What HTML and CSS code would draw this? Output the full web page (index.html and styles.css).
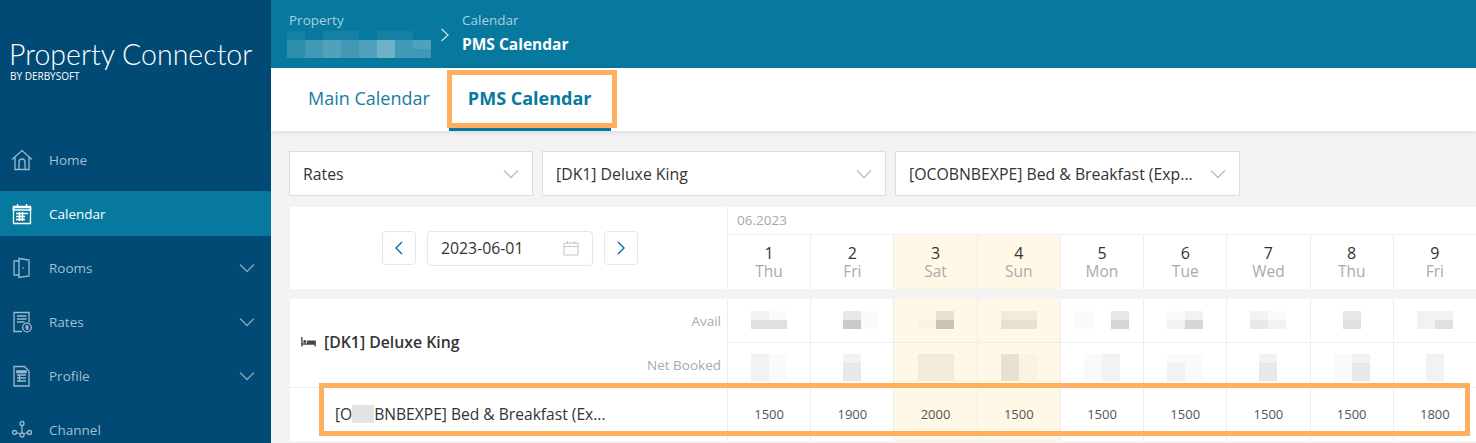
FILE: index.html
```html
<!DOCTYPE html>
<html lang="en">
  <head>
    <meta charset="UTF-8" />
    <title>Property Connector - PMS Calendar</title>
    <link rel="stylesheet" href="styles.css">
  </head>
  <body>
    <div class="app">
      <aside class="sidebar">
        <div class="logo">
          <div class="logo-name">Property Connector</div>
          <div class="logo-sub">BY DERBYSOFT</div>
        </div>
        <nav class="side-nav">
          <a class="nav-item">
            <svg class="nav-icon" viewBox="0 0 22 22"><path d="M1 10.500 11 1.500l10 9M4 8.500V20.500H18V8.500M8 20.500V13a3 3 0 0 1 6 0v7.500"/></svg>
            <span>Home</span>
          </a>
          <a class="nav-item active">
            <svg class="nav-icon" viewBox="0 0 22 22"><path d="M2.500 3.500h17v17h-17zM6.500 1v4M15.500 1v4"/><path class="thick" d="M2.500 4.500h17v2.500h-17zM5 10.500h12M5 13.500h9M5 16.500h9M8.500 9v9M11.500 9v9"/></svg>
            <span>Calendar</span>
          </a>
          <a class="nav-item">
            <svg class="nav-icon" viewBox="0 0 22 22"><path d="M8 4H3v14h5M8 1.500l10 1.500v16L8 20.500zM11.500 11h1.300"/></svg>
            <span>Rooms</span>
            <svg class="nav-caret" viewBox="0 0 16 10"><path d="M1 1.500 8 8.500l7-7"/></svg>
          </a>
          <a class="nav-item">
            <svg class="nav-icon" viewBox="0 0 22 22"><path d="M11 20.500H3V1.500h15v10M6 5h9.500M6 8h9.500M6 11h7.500"/><circle cx="16" cy="16.500" r="4.300"/><path d="M17.500 14.800h-2.300v1.700h1.700v1.700h-2.300"/></svg>
            <span>Rates</span>
            <svg class="nav-caret" viewBox="0 0 16 10"><path d="M1 1.500 8 8.500l7-7"/></svg>
          </a>
          <a class="nav-item">
            <svg class="nav-icon" viewBox="0 0 22 22"><path d="M3 1.500h10.500L18 6v15H3zM6 10h9M6 13h9M6 16h9M8.500 9.500v7.500"/><path class="thick" d="M6 6h9v1.500H6z"/></svg>
            <span>Profile</span>
            <svg class="nav-caret" viewBox="0 0 16 10"><path d="M1 1.500 8 8.500l7-7"/></svg>
          </a>
          <a class="nav-item">
            <svg class="nav-icon" viewBox="0 0 22 22"><circle cx="11" cy="4.500" r="2"/><circle cx="11" cy="16" r="2"/><circle cx="3.500" cy="13.500" r="2"/><circle cx="18.500" cy="13.500" r="2"/><path d="M11 6.500v7.500M5.500 13.500l3.800 1.500M16.500 13.500l-3.800 1.500"/></svg>
            <span>Channel</span>
          </a>
        </nav>
      </aside>

      <main class="main">
        <div class="topbar">
          <div class="crumb">
            <div class="crumb-label">Property</div>
            <div class="mosaic top-mosaic">
              <i class="t1"></i><i></i><i class="t1"></i><i class="t1"></i><i></i><i class="t1"></i><i class="t1"></i><i></i>
              <i class="t2"></i><i class="t3"></i><i class="t4"></i><i class="t3"></i><i class="t4"></i><i class="t5"></i><i class="t3"></i><i class="t4"></i>
              <i class="t2"></i><i class="t3"></i><i class="t4"></i><i class="t3"></i><i class="t4"></i><i class="t5"></i><i class="t3"></i><i class="t3"></i>
            </div>
          </div>
          <svg class="crumb-arrow" viewBox="0 0 10 14"><path d="M1.500 1 8 7l-6.500 6"/></svg>
          <div class="crumb">
            <div class="crumb-label">Calendar</div>
            <div class="crumb-current">PMS Calendar</div>
          </div>
        </div>

        <div class="tabs">
          <a class="tab">Main Calendar</a>
          <a class="tab tab-active">PMS Calendar</a>
          <div class="mark mark-tab"></div>
        </div>

        <div class="content">
          <div class="filters">
            <div class="select select-type"><span class="select-text">Rates</span><svg class="select-caret" viewBox="0 0 16 10"><path d="M1 1.500 8 8.500l7-7"/></svg></div>
            <div class="select select-wide"><span class="select-text">[DK1] Deluxe King</span><svg class="select-caret" viewBox="0 0 16 10"><path d="M1 1.500 8 8.500l7-7"/></svg></div>
            <div class="select select-wide"><span class="select-text">[OCOBNBEXPE] Bed &amp; Breakfast (Exp...</span><svg class="select-caret" viewBox="0 0 16 10"><path d="M1 1.500 8 8.500l7-7"/></svg></div>
          </div>

          <section class="card head-card">
            <div class="pager">
              <button class="pager-btn"><svg viewBox="0 0 10 14"><path d="M8 1 2 7l6 6"/></svg></button>
              <div class="date-input">
                <span>2023-06-01</span>
                <svg class="date-icon" viewBox="0 0 16 16"><path d="M1 3h14v12H1zM1 6.500h14M4.500 1v3M11.500 1v3"/></svg>
              </div>
              <button class="pager-btn"><svg viewBox="0 0 10 14"><path d="M2 1l6 6-6 6"/></svg></button>
            </div>
            <div class="month-col">
              <div class="month">06.2023</div>
              <div class="days">
                <div class="day"><b>1</b><span>Thu</span></div>
                <div class="day"><b>2</b><span>Fri</span></div>
                <div class="day weekend"><b>3</b><span>Sat</span></div>
                <div class="day weekend"><b>4</b><span>Sun</span></div>
                <div class="day"><b>5</b><span>Mon</span></div>
                <div class="day"><b>6</b><span>Tue</span></div>
                <div class="day"><b>7</b><span>Wed</span></div>
                <div class="day"><b>8</b><span>Thu</span></div>
                <div class="day"><b>9</b><span>Fri</span></div>
              </div>
            </div>
          </section>

          <section class="card room-card">
            <div class="room-head">
              <div class="room-name">
                <svg class="bed-icon" viewBox="0 0 18 12"><path d="M1 1v10.500h1.500V9.500h13v2H17V5H7.500v3H2.500V1z"/><circle cx="5" cy="6" r="1.700"/></svg>
                <span>[DK1] Deluxe King</span>
              </div>
              <div class="room-labels">
                <div>Avail</div>
                <div>Net Booked</div>
              </div>
            </div>

            <div class="cell"><div class="mosaic c2"><i class="g2"></i><i class="g1"></i><i class="g4"></i><i class="g4"></i></div></div>
            <div class="cell"><div class="mosaic c3"><i></i><i class="g3"></i><i class="g1"></i><i></i><i class="g6"></i><i class="g1"></i></div></div>
            <div class="cell weekend"><div class="mosaic c2"><i></i><i class="g3"></i><i class="g1"></i><i class="g6"></i></div></div>
            <div class="cell weekend"><div class="mosaic c2"><i class="g2"></i><i class="g2"></i><i class="g3"></i><i class="g3"></i></div></div>
            <div class="cell"><div class="mosaic c3"><i class="g1"></i><i></i><i class="g3"></i><i class="g1"></i><i></i><i class="g5"></i></div></div>
            <div class="cell"><div class="mosaic c2"><i class="g1"></i><i class="g2"></i><i class="g2"></i><i class="g5"></i></div></div>
            <div class="cell"><div class="mosaic c2"><i class="g2"></i><i class="g1"></i><i class="g3"></i><i class="g2"></i></div></div>
            <div class="cell"><div class="mosaic c1"><i class="g3"></i><i class="g4"></i></div></div>
            <div class="cell"><div class="mosaic c2"><i class="g2"></i><i class="g2"></i><i class="g2"></i><i class="g4"></i></div></div>

            <div class="cell tall"><div class="mosaic c2 r3"><i class="g2"></i><i class="g1"></i><i class="g2"></i><i class="g1"></i><i class="g2"></i><i class="g1"></i></div></div>
            <div class="cell tall"><div class="mosaic c1 r3"><i class="g2"></i><i class="g3"></i><i class="g3"></i></div></div>
            <div class="cell tall weekend"><div class="mosaic c2 r3"><i class="g2"></i><i class="g2"></i><i class="g2"></i><i class="g2"></i><i class="g2"></i><i class="g2"></i></div></div>
            <div class="cell tall weekend"><div class="mosaic c2 r3"><i class="g3"></i><i class="g1"></i><i class="g3"></i><i class="g1"></i><i class="g3"></i><i class="g1"></i></div></div>
            <div class="cell tall"><div class="mosaic c2 r3"><i class="g1"></i><i class="g2"></i><i class="g1"></i><i class="g2"></i><i class="g1"></i><i class="g2"></i></div></div>
            <div class="cell tall"><div class="mosaic c2 r3"><i class="g1"></i><i class="g1"></i><i class="g2"></i><i class="g1"></i><i class="g2"></i><i class="g1"></i></div></div>
            <div class="cell tall"><div class="mosaic c1 r3"><i class="g2"></i><i class="g3"></i><i class="g3"></i></div></div>
            <div class="cell tall"><div class="mosaic c2 r3"><i class="g1"></i><i class="g2"></i><i class="g1"></i><i class="g3"></i><i class="g1"></i><i class="g3"></i></div></div>
            <div class="cell tall"><div class="mosaic c1 r3"><i class="g2"></i><i class="g2"></i><i class="g2"></i></div></div>

            <div class="rate-name">[O<span class="smudge">CO</span>BNBEXPE] Bed &amp; Breakfast (Ex...</div>
            <div class="rate">1500</div>
            <div class="rate">1900</div>
            <div class="rate weekend">2000</div>
            <div class="rate weekend">1500</div>
            <div class="rate">1500</div>
            <div class="rate">1500</div>
            <div class="rate">1500</div>
            <div class="rate">1500</div>
            <div class="rate">1800</div>
          </section>
          <div class="mark mark-rate"></div>
        </div>
      </main>
    </div>
  </body>
</html>
```

FILE: styles.css
```css
* {
  box-sizing: border-box;
}
html,
body {
  margin: 0;
  height: 100%;
  overflow: hidden;
}
body {
  font-family: "Open Sans", Arial, sans-serif;
  color: #333;
  background-color: #f3f3f3;
}
svg {
  display: block;
  fill: none;
  stroke: currentColor;
}
.app {
  display: flex;
  height: 443px;
}

/* sidebar */
.sidebar {
  width: 271px;
  flex-shrink: 0;
  background-color: #004a75;
  overflow: hidden;
}
.logo {
  height: 137px;
  padding: 37px 0 0 9px;
  color: #fff;
}
.logo-name {
  font-family: Lato, sans-serif;
  font-weight: 300;
  font-size: 28.500px;
  line-height: 34px;
  white-space: nowrap;
}
.logo-sub {
  padding-left: 1px;
  font-size: 10px;
  font-weight: 500;
  line-height: 11px;
}
.nav-item {
  display: flex;
  align-items: center;
  height: 45px;
  margin-bottom: 9px;
  padding: 0 16px 0 11px;
  font-size: 13.500px;
  color: #a3bfd1;
}
.nav-item.active {
  background-color: #07799f;
  color: #fff;
}
.nav-icon {
  width: 22px;
  height: 22px;
  margin-right: 16px;
  stroke-width: 1.300;
  color: #9bb9cc;
}
.active .nav-icon {
  color: #fff;
}
.nav-icon .thick {
  stroke-width: 1.600;
}
.nav-caret {
  width: 16px;
  height: 10px;
  margin-left: auto;
  stroke-width: 1.500;
  color: #7fa3bc;
}

/* top bar */
.main {
  flex: 1;
  min-width: 0;
}
.topbar {
  display: flex;
  align-items: center;
  height: 68px;
  padding: 10px 0 0 18px;
  background-color: #07799f;
  color: #fff;
}
.crumb {
  align-self: flex-start;
}
.crumb-label {
  font-size: 13.500px;
  line-height: 21px;
  color: #a7d0e0;
}
.crumb-current {
  margin-top: 1px;
  font-size: 15.500px;
  font-weight: 700;
  line-height: 24px;
}
.crumb-arrow {
  width: 10px;
  height: 14px;
  margin: 0 12px 8px 9px;
  stroke-width: 1.300;
  color: #c4e0ea;
}
.mosaic {
  display: grid;
  grid-auto-rows: 9px;
}
.mosaic i {
  display: block;
}
.top-mosaic {
  grid-template-columns: repeat(8, 18px);
  margin: 0 0 0 -2px;
}
.t1 { background-color: rgba(255, 255, 255, 0.06); }
.t2 { background-color: rgba(255, 255, 255, 0.16); }
.t3 { background-color: rgba(255, 255, 255, 0.24); }
.t4 { background-color: rgba(255, 255, 255, 0.3); }
.t5 { background-color: rgba(255, 255, 255, 0.42); }

/* tabs */
.tabs {
  position: relative;
  display: flex;
  height: 63px;
  padding-left: 19px;
  background-color: #fff;
  box-shadow: 0 1px 5px rgba(0, 0, 0, 0.12);
}
.tab {
  padding: 0 19px 0 18px;
  font-size: 18px;
  line-height: 60px;
  color: #1a7ba0;
  white-space: nowrap;
}
.tab-active {
  padding: 0 20px 0 19px;
  font-weight: 700;
  color: #07799f;
  border-bottom: 4px solid #07799f;
}
.mark {
  position: absolute;
  border: 5px solid #ffaf60;
  pointer-events: none;
}
.mark-tab {
  left: 176px;
  top: 2px;
  width: 170px;
  height: 58px;
}

/* filters */
.content {
  position: relative;
  height: 312px;
  padding: 20px 0 0 19px;
}
.filters {
  display: flex;
  gap: 9px;
  margin-left: -1px;
}
.select {
  display: flex;
  align-items: center;
  justify-content: space-between;
  height: 45px;
  padding: 0 13px;
  background-color: #fff;
  border: 1px solid #ddd;
  font-size: 15.800px;
  white-space: nowrap;
}
.select-type {
  width: 244px;
}
.select-wide {
  width: 344px;
}
.select-wide:last-child {
  width: 345px;
}
.select-caret {
  width: 16px;
  height: 10px;
  stroke-width: 1.300;
  color: #bbb;
}

/* date header */
.card {
  background-color: #fff;
  border-radius: 3px 0 0 3px;
}
.head-card {
  display: flex;
  height: 82px;
  margin-top: 11px;
}
.pager {
  display: flex;
  align-items: center;
  justify-content: center;
  gap: 11px;
  width: 437px;
  flex-shrink: 0;
  padding-left: 3px;
}
.pager-btn {
  display: flex;
  align-items: center;
  justify-content: center;
  width: 34px;
  height: 34px;
  padding: 0;
  background-color: #fff;
  border: 1px solid #e6e6e6;
  border-radius: 4px;
  color: #07699f;
}
.pager-btn svg {
  width: 10px;
  height: 14px;
  stroke-width: 1.400;
}
.date-input {
  display: flex;
  align-items: center;
  justify-content: space-between;
  width: 166px;
  height: 35px;
  padding: 0 13px;
  border: 1px solid #e6e6e6;
  border-radius: 4px;
  font-size: 15.800px;
}
.date-icon {
  width: 16px;
  height: 16px;
  color: #c4c4c4;
}
.month-col {
  flex: 1;
  min-width: 0;
}
.month {
  height: 28px;
  padding-left: 9px;
  font-size: 13.500px;
  line-height: 26px;
  color: #aaa;
  border-left: 1px solid #eee;
  border-bottom: 1px solid #eee;
}
.days {
  display: grid;
  grid-template-columns: repeat(9, 1fr);
  height: 54px;
}
.day {
  display: flex;
  flex-direction: column;
  align-items: center;
  justify-content: center;
  border-left: 1px solid #eee;
  font-size: 15.500px;
  color: #aaa;
}
.day b {
  font-weight: 400;
  font-size: 16px;
  line-height: 18px;
  color: #333;
}
.day span {
  line-height: 19px;
}
.weekend {
  background-color: #fff8e6;
}

/* room rows */
.room-card {
  display: grid;
  grid-template-columns: 437px repeat(9, 1fr);
  grid-template-rows: 44px 44px 54px;
  margin-top: 10px;
}
.room-head {
  display: flex;
  align-items: center;
  justify-content: space-between;
  grid-row: span 2;
  padding-left: 10px;
}
.room-name {
  display: flex;
  align-items: center;
  padding-bottom: 3px;
  font-size: 15.800px;
  font-weight: 600;
}
.bed-icon {
  width: 17px;
  height: 11px;
  margin-right: 7px;
  fill: #444;
  stroke: none;
}
.room-labels {
  padding-right: 6px;
  text-align: right;
  font-size: 13.500px;
  color: #aaa;
}
.room-labels div {
  height: 44px;
  line-height: 44px;
}
.cell {
  display: flex;
  align-items: center;
  justify-content: center;
  padding-bottom: 2px;
  border-left: 1px solid #eee;
  border-bottom: 1px solid #eee;
}
.cell.tall {
  border-bottom: 0;
  padding: 5px 0 0;
}
.c1 { grid-template-columns: 18px; }
.c2 { grid-template-columns: repeat(2, 18px); }
.c3 { grid-template-columns: repeat(3, 18px); }
.g1 { background-color: rgba(0, 0, 0, 0.02); }
.g2 { background-color: rgba(0, 0, 0, 0.05); }
.g3 { background-color: rgba(0, 0, 0, 0.09); }
.g4 { background-color: rgba(0, 0, 0, 0.12); }
.g5 { background-color: rgba(0, 0, 0, 0.16); }
.g6 { background-color: rgba(0, 0, 0, 0.21); }
.rate-name {
  padding-left: 45px;
  font-size: 15.600px;
  line-height: 53px;
  white-space: nowrap;
  border-top: 1px solid #eee;
}
.smudge {
  color: transparent;
  background: linear-gradient(#e3e3e3, #e3e3e3) center / 100% 18px no-repeat;
}
.rate {
  border-left: 1px solid #eee;
  border-top: 1px solid #eee;
  text-align: center;
  font-size: 13px;
  font-weight: 500;
  line-height: 53px;
  color: #555;
}
.mark-rate {
  left: 48px;
  top: 252px;
  width: 1151px;
  height: 53px;
}
```
